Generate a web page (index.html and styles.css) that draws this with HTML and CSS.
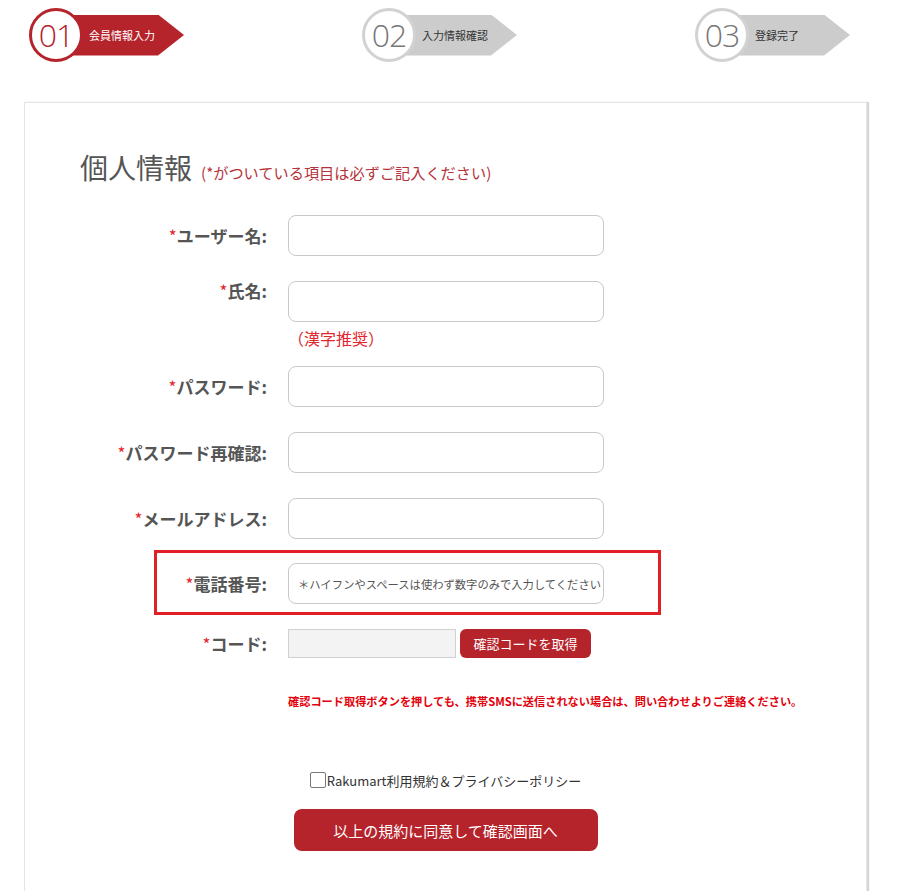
FILE: index.html
```html
<!DOCTYPE html>
<html lang="ja">
<head>
<meta charset="utf-8">
<title>会員登録</title>
<link rel="stylesheet" href="styles.css">
</head>
<body>
<div class="steps">
  <div class="step active"><div class="circle">01</div><div class="banner">会員情報入力</div></div>
  <div class="step"><div class="circle">02</div><div class="banner">入力情報確認</div></div>
  <div class="step"><div class="circle">03</div><div class="banner">登録完了</div></div>
</div>
<div class="panel">
  <h2 class="title">個人情報<span class="sub">(*がついている項目は必ずご記入ください)</span></h2>
  <div class="form">
    <div class="row">
      <label class="label"><span class="req">*</span>ユーザー名:</label>
      <input class="field" type="text">
    </div>
    <div class="row row-top row-name">
      <label class="label"><span class="req">*</span>氏名:</label>
      <div class="fieldwrap">
        <input class="field" type="text">
        <div class="hint">（漢字推奨）</div>
      </div>
    </div>
    <div class="row">
      <label class="label"><span class="req">*</span>パスワード:</label>
      <input class="field" type="password">
    </div>
    <div class="row">
      <label class="label"><span class="req">*</span>パスワード再確認:</label>
      <input class="field" type="password">
    </div>
    <div class="row">
      <label class="label"><span class="req">*</span>メールアドレス:</label>
      <input class="field" type="text">
    </div>
    <div class="row highlight">
      <label class="label"><span class="req">*</span>電話番号:</label>
      <input class="field phone" type="text" placeholder="＊ハイフンやスペースは使わず数字のみで入力してください">
    </div>
    <div class="row row-code">
      <label class="label"><span class="req">*</span>コード:</label>
      <input class="code-field" type="text">
      <button class="code-btn" type="button">確認コードを取得</button>
    </div>
    <p class="sms-note">確認コード取得ボタンを押しても、携帯SMSに送信されない場合は、問い合わせよりご連絡ください。</p>
    <div class="agree">
      <input class="check" type="checkbox"><span class="agree-text">Rakumart利用規約＆プライバシーポリシー</span>
    </div>
    <div class="submit-wrap">
      <button class="submit" type="button">以上の規約に同意して確認画面へ</button>
    </div>
  </div>
</div>
</body>
</html>
```

FILE: styles.css
```css
* { box-sizing: border-box; }
html, body { margin: 0; padding: 0; background: #fff; }
body {
  font-family: "Noto Sans CJK JP", "Noto Sans", sans-serif;
  color: #555;
}

/* steps */
.steps {
  display: flex;
  padding: 8px 0 0 29px;
  height: 102px;
}
.step {
  flex: none;
  width: 333px;
  height: 54px;
  display: flex;
  align-items: center;
}
.step:nth-child(3) { width: 200px; }
.circle {
  position: relative;
  z-index: 1;
  flex: none;
  width: 54px;
  height: 54px;
  border: 3px solid #d2d2d2;
  border-radius: 50%;
  background: #fff;
  display: flex;
  align-items: center;
  justify-content: center;
  font-family: "Open Sans", sans-serif;
  font-weight: 300;
  font-size: 32px;
  letter-spacing: -1px;
  color: #777;
  line-height: 1;
}
.banner {
  flex: none;
  margin-left: -20px;
  width: 121px;
  height: 41px;
  padding-left: 26px;
  display: flex;
  align-items: center;
  font-size: 11px;
  color: #333;
  background: #cccccc;
  clip-path: polygon(0 0, 95px 0, 100% 50%, 95px 100%, 0 100%);
}
.step.active .circle { border-color: #b5232b; color: #b5232b; }
.step.active .banner { background: #b5232b; color: #fff; }

/* panel */
.panel {
  margin-left: 24px;
  width: 843px;
  border: 1px solid #e4e4e4;
  box-shadow: 2px 0 1px #d6d6d6;
  padding: 47px 0 80px;
}
.title {
  margin: 0 0 26px 55px;
  font-size: 28px;
  font-weight: 400;
  line-height: 34px;
  color: #555;
}
.sub {
  margin-left: 9px;
  font-size: 15.2px;
  color: #b5323a;
}

.row {
  display: flex;
  align-items: center;
  margin-bottom: 25px;
}
.row-top { align-items: flex-start; }
.row-name { margin-bottom: 18px; }
.label {
  width: 242px;
  flex: none;
  text-align: right;
  font-size: 17px;
  font-weight: 700;
  line-height: 20px;
  color: #555;
}
.req { color: #e3262d; font-weight: 400; }
.field, .fieldwrap { margin-left: 21px; }
.fieldwrap .field { margin-left: 0; }
.field {
  width: 316px;
  height: 41px;
  border: 1px solid #c8c8c8;
  border-radius: 8px;
  background: #fff;
  padding: 0 10px;
  font-family: inherit;
  font-size: 12px;
  color: #555;
  outline: none;
}
.field.phone { font-size: 11.3px; padding: 0 0 0 9px; }
.field::placeholder { color: #555; }
.hint {
  margin-top: 6px;
  line-height: 20px;
  font-size: 16px;
  color: #e3262d;
}
.highlight {
  margin: -14px 0 14px 129px;
  width: 507px;
  border: 3px solid #e21f26;
  padding: 10px 0 8px;
}
.highlight .label { width: 110px; }

.row-code { margin-bottom: 0; }
.code-field {
  margin-left: 21px;
  width: 168px;
  height: 29px;
  border: 1px solid #d0d0d0;
  background: #f3f3f3;
  outline: none;
}
.code-btn {
  margin-left: 4px;
  width: 131px;
  height: 29px;
  border: none;
  border-radius: 6px;
  background: #b5232b;
  color: #fff;
  font-family: inherit;
  font-size: 13px;
  padding: 0;
}
.sms-note {
  margin: 35px 0 0 263px;
  line-height: 16px;
  font-size: 11.2px;
  font-weight: 700;
  color: #e3000b;
}
.agree {
  margin-top: 61px;
  display: flex;
  justify-content: center;
  align-items: center;
  height: 20px;
}
.check {
  appearance: none;
  -webkit-appearance: none;
  width: 16px;
  height: 16px;
  margin: 0 1px 0 0;
  border: 1px solid #777;
  border-radius: 2px;
  background: #fff;
}
.agree-text {
  font-size: 13px;
  color: #333;
}
.submit-wrap {
  margin-top: 19px;
  display: flex;
  justify-content: center;
}
.submit {
  width: 304px;
  height: 42px;
  border: none;
  border-radius: 8px;
  background: #b5232b;
  color: #fff;
  font-family: inherit;
  font-size: 15px;
}
```
